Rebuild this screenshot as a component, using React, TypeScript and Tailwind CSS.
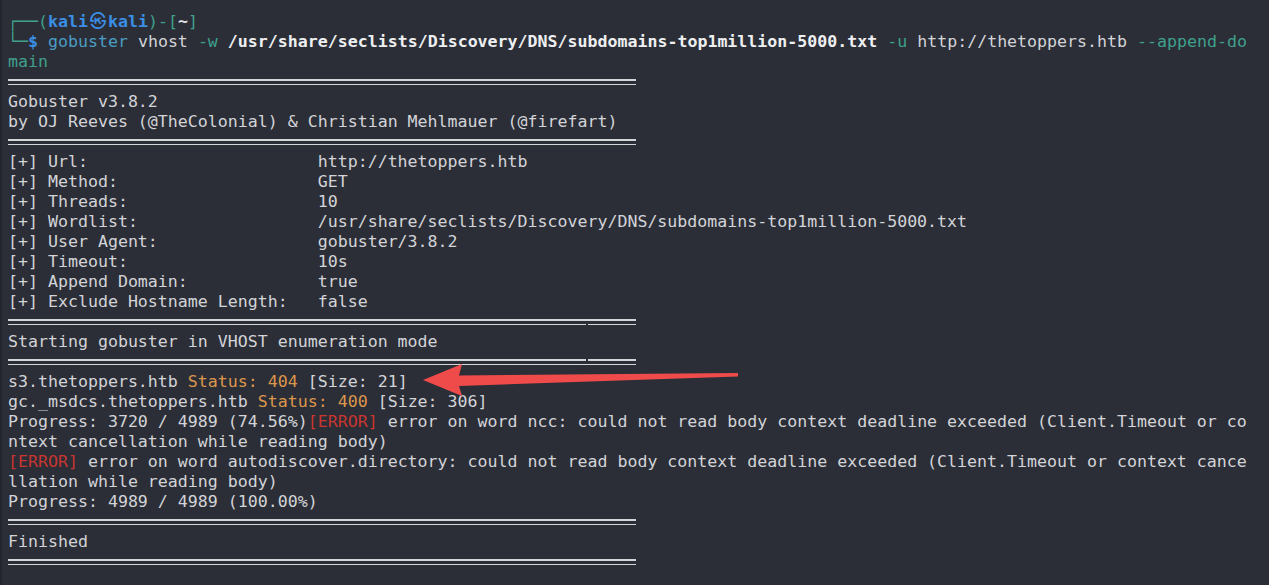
const mono = "font-['DejaVu_Sans_Mono','Liberation_Mono','Noto_Sans_CJK_KR',monospace]"

const teal = 'text-[#3fa08c]'
const blue = 'text-[#3b8ee6]'
const txt = 'text-[#d3d4d7]'
const orange = 'text-[#dc964c]'
const red = 'text-[#c9352f]'

function Line({ children }: { children?: React.ReactNode }) {
  return <div className="h-5 leading-5 whitespace-pre">{children}</div>
}

// double rule, optionally with a small gap in the top or bottom line
function Rule({ gap }: { gap?: 'top' | 'bottom' }) {
  const line = (broken: boolean) =>
    broken ? (
      <div className="flex h-[1.5px] w-[628px] gap-[2px]">
        <div className="w-[578px] bg-[#d4d5d8]" />
        <div className="flex-1 bg-[#d4d5d8]" />
      </div>
    ) : (
      <div className="h-[1.5px] w-[628px] bg-[#d4d5d8]" />
    )
  return (
    <div className="flex h-5 flex-col justify-center gap-[3px]">
      {line(gap === 'top')}
      {line(gap === 'bottom')}
    </div>
  )
}

function Opt({ label, value }: { label: string; value: string }) {
  return <Line>{`[+] ${label}`.padEnd(31, ' ') + value}</Line>
}

export default function App() {
  return (
    <div
      className={`relative h-[585px] w-[1269px] overflow-hidden border-l-2 border-[#23252d] bg-[#2b2e37] pl-[6px] pt-[12px] text-[16.6px] ${mono} ${txt}`}
    >
      {/* prompt */}
      <Line>
        <span className={teal}>┌──(</span>
        <span className={`font-bold ${blue}`}>kali</span>
        <span className={`inline-block w-[20px] text-center font-bold ${blue}`}>㉿</span>
        <span className={`font-bold ${blue}`}>kali</span>
        <span className={teal}>)-[</span>
        <span className="font-bold text-[#e4e5e7]">~</span>
        <span className={teal}>]</span>
      </Line>
      <Line>
        <span className={teal}>└─</span>
        <span className={`font-bold ${blue}`}>$</span>{' '}
        <span className="text-[#4a9dc4]">gobuster</span> vhost{' '}
        <span className={teal}>-w</span>{' '}
        <span className="font-bold text-[#eeeff0]">
          /usr/share/seclists/Discovery/DNS/subdomains-top1million-5000.txt
        </span>{' '}
        <span className={teal}>-u</span> http://thetoppers.htb{' '}
        <span className={teal}>--append-do</span>
      </Line>
      <Line>
        <span className={teal}>main</span>
      </Line>

      <Rule />
      <Line>Gobuster v3.8.2</Line>
      <Line>by OJ Reeves (@TheColonial) &amp; Christian Mehlmauer (@firefart)</Line>
      <Rule />

      <Opt label="Url:" value="http://thetoppers.htb" />
      <Opt label="Method:" value="GET" />
      <Opt label="Threads:" value="10" />
      <Opt label="Wordlist:" value="/usr/share/seclists/Discovery/DNS/subdomains-top1million-5000.txt" />
      <Opt label="User Agent:" value="gobuster/3.8.2" />
      <Opt label="Timeout:" value="10s" />
      <Opt label="Append Domain:" value="true" />
      <Opt label="Exclude Hostname Length:" value="false" />
      <Rule gap="bottom" />
      <Line>Starting gobuster in VHOST enumeration mode</Line>
      <Rule gap="top" />

      <Line>
        s3.thetoppers.htb <span className={orange}>Status: 404</span> [Size: 21]
      </Line>
      <Line>
        gc._msdcs.thetoppers.htb <span className={orange}>Status: 400</span> [Size: 306]
      </Line>
      <Line>
        Progress: 3720 / 4989 (74.56%)<span className={red}>[ERROR]</span> error on word ncc: could not
        read body context deadline exceeded (Client.Timeout or co
      </Line>
      <Line>ntext cancellation while reading body)</Line>
      <Line>
        <span className={red}>[ERROR]</span> error on word autodiscover.directory: could not read body
        context deadline exceeded (Client.Timeout or context cance
      </Line>
      <Line>llation while reading body)</Line>
      <Line>Progress: 4989 / 4989 (100.00%)</Line>
      <Rule />
      <Line>Finished</Line>
      <Rule />

      {/* annotation arrow */}
      <svg className="pointer-events-none absolute left-[-2px] top-0" width="1269" height="585">
        <polygon
          points="423,380 462,364 459,375.5 738,373 738,376.5 459,386 462,396"
          fill="#f04b4b"
        />
      </svg>
    </div>
  )
}
